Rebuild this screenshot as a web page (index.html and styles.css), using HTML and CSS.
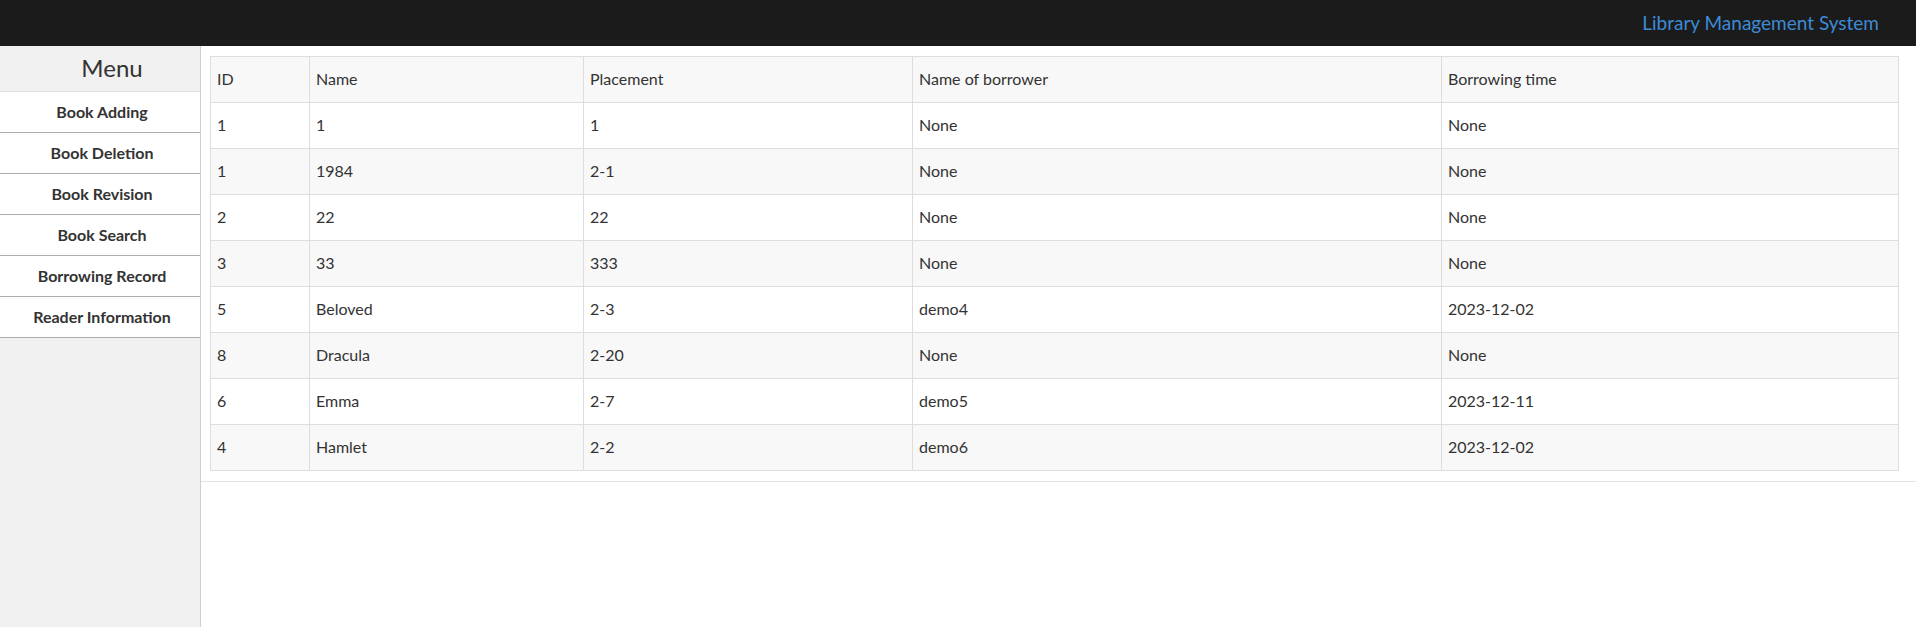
FILE: index.html
```html
<!DOCTYPE html>
<html lang="en">
<head>
<meta charset="utf-8">
<title>Library Management System</title>
<link rel="stylesheet" href="styles.css">
</head>
<body>
<header class="topbar">
  <span class="brand">Library Management System</span>
</header>
<div class="layout">
  <aside class="sidebar">
    <div class="menu-title">Menu</div>
    <nav class="menu">
      <a class="menu-item" href="#">Book Adding</a>
      <a class="menu-item" href="#">Book Deletion</a>
      <a class="menu-item" href="#">Book Revision</a>
      <a class="menu-item" href="#">Book Search</a>
      <a class="menu-item" href="#">Borrowing Record</a>
      <a class="menu-item" href="#">Reader Information</a>
    </nav>
  </aside>
  <main class="content">
    <section class="panel">
      <table class="books">
        <colgroup>
          <col class="c-id"><col class="c-name"><col class="c-place"><col class="c-borrower"><col class="c-time">
        </colgroup>
        <thead>
          <tr><th>ID</th><th>Name</th><th>Placement</th><th>Name of borrower</th><th>Borrowing time</th></tr>
        </thead>
        <tbody>
          <tr><td>1</td><td>1</td><td>1</td><td>None</td><td>None</td></tr>
          <tr><td>1</td><td>1984</td><td>2-1</td><td>None</td><td>None</td></tr>
          <tr><td>2</td><td>22</td><td>22</td><td>None</td><td>None</td></tr>
          <tr><td>3</td><td>33</td><td>333</td><td>None</td><td>None</td></tr>
          <tr><td>5</td><td>Beloved</td><td>2-3</td><td>demo4</td><td>2023-12-02</td></tr>
          <tr><td>8</td><td>Dracula</td><td>2-20</td><td>None</td><td>None</td></tr>
          <tr><td>6</td><td>Emma</td><td>2-7</td><td>demo5</td><td>2023-12-11</td></tr>
          <tr><td>4</td><td>Hamlet</td><td>2-2</td><td>demo6</td><td>2023-12-02</td></tr>
        </tbody>
      </table>
    </section>
  </main>
</div>
</body>
</html>
```
FILE: styles.css
```css
* { box-sizing: border-box; }
html, body { margin: 0; padding: 0; }
body {
  font-family: Lato, "Noto Sans", sans-serif;
  color: #333;
  background: #fff;
  min-height: 100vh;
}
.topbar {
  height: 46px;
  background: #1b1b1b;
  display: flex;
  align-items: center;
  justify-content: flex-end;
  padding-right: 37px;
}
.brand {
  color: #3d8bd6;
  font-size: 19px;
  line-height: 24px;
}
.layout {
  display: flex;
  min-height: calc(100vh - 46px);
}
.sidebar {
  width: 201px;
  flex: none;
  background: #f1f1f1;
  border-right: 1px solid #cfcfcf;
}
.menu-title {
  height: 46px;
  padding-left: 24px;
  text-align: center;
  font-size: 24px;
  line-height: 44px;
  border-bottom: 1px solid #dedede;
}
.menu { display: flex; flex-direction: column; }
.menu-item {
  display: block;
  height: 41px;
  line-height: 39px;
  padding-left: 4px;
  background: #fff;
  border-bottom: 1px solid #adadad;
  text-align: center;
  font-weight: 700;
  font-size: 16px;
  color: #333;
  text-decoration: none;
}
.content { flex: 1; min-width: 0; }
.panel {
  padding: 10px 17px 10px 9px;
  border-bottom: 1px solid #e3e3e3;
}
.books {
  width: 100%;
  border-collapse: collapse;
  border: 1px solid #ddd;
  font-size: 16px;
}
.c-id { width: 99px; }
.c-name { width: 274px; }
.c-place { width: 329px; }
.c-borrower { width: 529px; }
.books th, .books td {
  border: 1px solid #ddd;
  text-align: left;
  font-weight: 400;
  padding: 11px 5px 12px 6px;
  line-height: 22px;
}
.books thead tr { background: #f8f8f8; }
.books tbody tr:nth-child(even) { background: #f8f8f8; }
```
